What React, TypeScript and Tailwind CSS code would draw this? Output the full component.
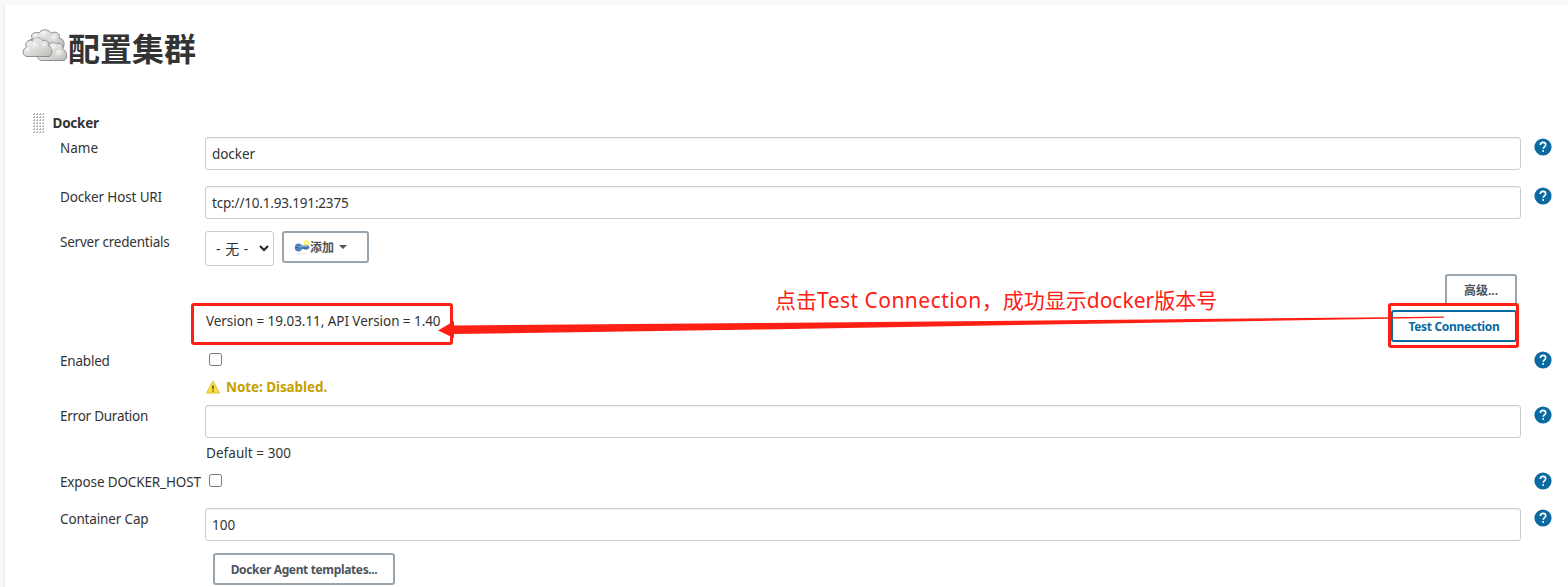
import React, { ReactNode } from "react";

const font = "font-['Noto_Sans','Noto_Sans_CJK_SC',sans-serif]";

function Help() {
  return (
    <svg className="block h-[18px] w-[18px]" viewBox="0 0 18 18">
      <circle cx="9" cy="9" r="8.6" fill="#0b6aa2" />
      <path d="M6.3 7.1C6.3 5.5 7.4 4.4 9 4.4s2.7 1 2.7 2.4c0 1.9-2.5 2.1-2.5 4" fill="none" stroke="#fff" strokeWidth="1.6" />
      <rect x="8.3" y="12.1" width="1.7" height="1.7" fill="#fff" />
    </svg>
  );
}

function Clouds() {
  return (
    <svg className="block h-[34px] w-[46px]" viewBox="0 0 46 34">
      <defs>
        <linearGradient id="cloud" x1="0" y1="0" x2="1" y2="1">
          <stop offset="0" stopColor="#f4f4f3" />
          <stop offset="0.55" stopColor="#dadad8" />
          <stop offset="1" stopColor="#b9b9b6" />
        </linearGradient>
        <radialGradient id="puff" cx="0.35" cy="0.3" r="0.75">
          <stop offset="0" stopColor="#fff" stopOpacity="0.8" />
          <stop offset="1" stopColor="#c4c4c1" stopOpacity="0.15" />
        </radialGradient>
      </defs>
      <g stroke="#858583" strokeWidth="0.9">
        <path d="M8 20C4 17 6 10 10.500 10C7.500 6 12 2 17 4C19-.2 27-.2 29 4C34 1.500 39 5 37 9.500C42 9 44 16 40 20Z" fill="url(#cloud)" />
        <path d="M19 31.500C14 30 15 24 19 23C19 18 23 17 26 19C25 14 32 12 34.500 15C38 13 42 16 40.500 20C45 21 46.500 30 42 31.500Z" fill="url(#cloud)" />
        <path d="M4.500 27.500C-.5 26 .5 19 4.500 18.500C2 14 6 10 10.500 11.500C12 7 19 8 20.500 11.500C25 10 28 14 26.500 17C31 18 31 26 27 27.500Z" fill="url(#cloud)" />
      </g>
      <g fill="url(#puff)">
        <circle cx="23" cy="6" r="4.500" /><circle cx="33" cy="10" r="4.500" /><circle cx="14.500" cy="8" r="3.500" />
        <circle cx="7" cy="22" r="4.500" /><circle cx="14" cy="18" r="5.500" /><circle cx="23" cy="17" r="4" />
        <circle cx="33" cy="19" r="4.500" /><circle cx="38" cy="25" r="5" />
      </g>
    </svg>
  );
}

function Handle() {
  return (
    <svg className="block h-[21px] w-[12px]" viewBox="0 0 12 21">
      <defs>
        <pattern id="dots" width="3" height="3" patternUnits="userSpaceOnUse">
          <path d="M0 1h1v1H0zM1 0h1v2H1z" fill="#b4b4b4" />
        </pattern>
      </defs>
      <rect width="12" height="21" fill="url(#dots)" />
    </svg>
  );
}

function Key() {
  return (
    <svg className="block h-4 w-4" viewBox="0 0 16 16">
      <ellipse cx="7" cy="13.500" rx="6" ry="1" fill="#ececec" />
      <circle cx="12.500" cy="3" r="2" fill="none" stroke="#faf04e" strokeWidth="1.400" />
      <path d="M6 5.500h8.500l1 1.500-1 2h-1l-.7 1.300-1-1.300-1 1-.8-1H6z" fill="#4172ad" />
      <ellipse cx="4.500" cy="7.500" rx="3.700" ry="4" fill="#4f83c0" />
      <path d="M5 6.500h9" stroke="#7ba6d6" />
      <circle cx="2.800" cy="7.500" r=".8" fill="#315a8c" />
    </svg>
  );
}

function Warning() {
  return (
    <svg className="block h-[14px] w-[15px]" viewBox="0 0 15 14">
      <path d="M7 1L13.500 13H.5Z" fill="#f7df3b" stroke="#dfc336" strokeLinejoin="round" />
      <path d="M7 5.500v3.700M7 10.200v1.300" stroke="#4e4718" strokeWidth="1.400" />
    </svg>
  );
}

function Row({ label, spacing, help, height, children }: { label?: string; spacing?: string; help?: boolean; height: string; children?: ReactNode }) {
  return (
    <div className={`flex shrink-0 items-start ${height}`}>
      <div className="w-[145px] shrink-0 whitespace-nowrap leading-[22px]"><span className={spacing}>{label}</span></div>
      <div className="w-[1316px] shrink-0">{children}</div>
      {help && <div className="ml-[13px] pt-px"><Help /></div>}
    </div>
  );
}

function Field({ value, spacing = "" }: { value: string; spacing?: string }) {
  return (
    <div className="flex h-[33px] items-center rounded-[3px] border border-[#ccc] bg-white pl-1.5 pt-0.5 shadow-[inset_0_1px_1px_rgba(0,0,0,0.06)]">
      <span className={spacing}>{value}</span>
    </div>
  );
}

const Check = () => <div className="ml-1 h-[13px] w-[13px] rounded-[2.5px] border border-[#767676] bg-white" />;

export default function App() {
  const button = "flex h-8 items-center justify-center rounded-[3px] border-2 bg-white pt-0.5 text-[12px] font-bold whitespace-nowrap";
  const gray = "border-[#98a4ae] text-[#4d545d]";
  return (
    <main className={`relative h-[587px] w-[1568px] overflow-hidden bg-[#f8f8f8] pt-[5px] text-[13.5px] text-[#333] ${font}`}>
      <div className="ml-1 flex h-[582px] flex-col border-l border-[#e3edf2] bg-white">
        <header className="flex h-[106px] items-start pl-[17px] pt-6">
          <Clouds />
          <h1 className="mt-0.5 text-[32px] font-bold leading-[36px]">配置集群</h1>
        </header>
        <div className="flex h-[26px] items-start pl-7 pt-0.5">
          <Handle />
          <h2 className="ml-[7.5px] font-bold leading-5 tracking-[-0.25px]">Docker</h2>
        </div>
        <div className="flex flex-col pl-[55px]">
          <Row label="Name" help height="h-[49px]"><Field value="docker" spacing="tracking-[-0.05px]" /></Row>
          <Row label="Docker Host URI" spacing="tracking-[-0.15px]" help height="h-[45px]"><Field value="tcp://10.1.93.191:2375" spacing="tracking-[-0.18px]" /></Row>
          <Row label="Server credentials" spacing="tracking-[-0.23px]" height="h-[43px]">
            <div className="flex items-start gap-2">
              <div className="flex h-[35px] w-[69px] items-center rounded-[3px] border border-[#ccc] pl-2.5 text-[14px]">
                <span className="tracking-[0.5px]">- 无 -</span>
                <svg className="ml-auto mr-1 h-[7px] w-[10px]" viewBox="0 0 10 7"><path d="M1 1l4 4 4-4" fill="none" stroke="#222" strokeWidth="2" /></svg>
              </div>
              <button className={`${button} ${gray} w-[87px] pr-2.5`}>
                <Key /><span>添加</span>
                <svg className="-mt-0.5 ml-[5px] h-1 w-2" viewBox="0 0 8 4"><path d="M0 0h8L4 4z" fill="#4d545d" /></svg>
              </button>
            </div>
          </Row>
          <Row height="h-[36px]"><button className={`${button} ${gray} ml-[1240px] w-[72px]`}>高级...</button></Row>
          <Row height="h-10">
            <div className="flex justify-between pl-px pr-1">
              <span className="leading-[22px] tracking-[-0.06px]">Version = 19.03.11, API Version = 1.40</span>
              <button className={`${button} w-[126px] border-[#0b6aa2] text-[#0b6aa2] tracking-[-0.33px]`}>Test Connection</button>
            </div>
          </Row>
          <Row label="Enabled" spacing="tracking-[-0.2px]" help height="h-[55px]">
            <div className="pt-[3px]"><Check /></div>
            <div className="mt-[11px] flex h-5 items-center pl-px font-bold text-[#c4a000]"><Warning /><span className="ml-[5px] tracking-[-0.08px]">Note: Disabled.</span></div>
          </Row>
          <Row label="Error Duration" spacing="tracking-[-0.25px]" help height="h-[66px]">
            <Field value="" />
            <div className="pl-px pt-1 leading-[22px]"><span className="tracking-[0.05px]">Default = 300</span></div>
          </Row>
          <Row label="Expose DOCKER_HOST" spacing="tracking-[-0.14px]" help height="h-[37px]"><div className="pt-[3px]"><Check /></div></Row>
          <Row label="Container Cap" spacing="tracking-[-0.15px]" help height="h-[45px]"><Field value="100" /></Row>
          <Row height="h-8"><button className={`${button} ${gray} ml-2 w-[182px] tracking-[-0.36px]`}>Docker Agent templates...</button></Row>
        </div>
      </div>
      <div className="absolute left-[191px] top-[303px] h-[42px] w-[262px] rounded-[3px] border-[3px] border-[#ff2015]" />
      <div className="absolute left-[1388px] top-[303px] h-[45px] w-[131px] rounded-[3px] border-[3px] border-[#ff2015]" />
      <svg className="absolute left-[438px] top-[314px] h-[24px] w-[1008px]" viewBox="0 0 1008 24">
        <path d="M0 16.500L16 7V11.500L320 9L760 5L950 3.300L1006 2.500V3.700L950 4.700L760 8L320 15.500L16 20V24Z" fill="#ff2015" />
      </svg>
      <div className="absolute left-[775px] top-[285px] whitespace-nowrap text-[21px] leading-[30px] text-[#ff2015]">点击<span className="tracking-[0.47px]">Test Connection</span>，成功显示docker版本号</div>
    </main>
  );
}
